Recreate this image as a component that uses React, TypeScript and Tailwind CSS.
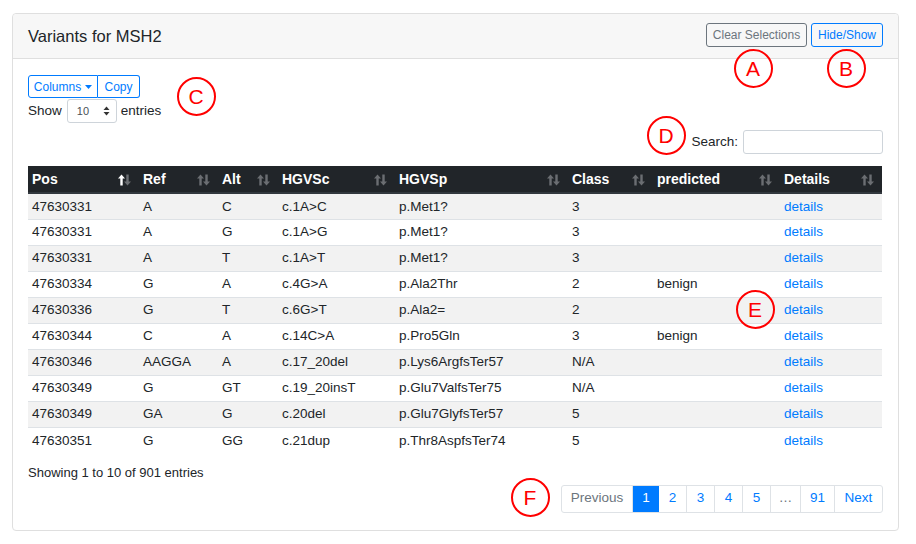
import React from "react";

const rows = [
  ["47630331", "A", "C", "c.1A>C", "p.Met1?", "3", ""],
  ["47630331", "A", "G", "c.1A>G", "p.Met1?", "3", ""],
  ["47630331", "A", "T", "c.1A>T", "p.Met1?", "3", ""],
  ["47630334", "G", "A", "c.4G>A", "p.Ala2Thr", "2", "benign"],
  ["47630336", "G", "T", "c.6G>T", "p.Ala2=", "2", ""],
  ["47630344", "C", "A", "c.14C>A", "p.Pro5Gln", "3", "benign"],
  ["47630346", "AAGGA", "A", "c.17_20del", "p.Lys6ArgfsTer57", "N/A", ""],
  ["47630349", "G", "GT", "c.19_20insT", "p.Glu7ValfsTer75", "N/A", ""],
  ["47630349", "GA", "G", "c.20del", "p.Glu7GlyfsTer57", "5", ""],
  ["47630351", "G", "GG", "c.21dup", "p.Thr8AspfsTer74", "5", ""],
];

const cols: { name: string; w: number; active?: boolean }[] = [
  { name: "Pos", w: 111, active: true },
  { name: "Ref", w: 79 },
  { name: "Alt", w: 60 },
  { name: "HGVSc", w: 117 },
  { name: "HGVSp", w: 173 },
  { name: "Class", w: 85 },
  { name: "predicted", w: 127 },
  { name: "Details", w: 102 },
];

function Mark({ letter, x, y }: { letter: string; x: number; y: number }) {
  return (
    <div
      className="absolute w-[39px] h-[39px] rounded-full border-2 border-[#ff0000] flex items-center justify-center text-[#ff0000] text-[21px] leading-none"
      style={{ left: x - 19.5, top: y - 19.5 }}
    >
      {letter}
    </div>
  );
}

function SortIcon({ active }: { active?: boolean }) {
  return (
    <svg width="14" height="12" viewBox="0 0 14 12" className="mr-[7px] shrink-0">
      <g fill={active ? "#ffffff" : "#6b6e72"} stroke="none">
        <path d="M3.5 0.5 L7 4.5 L4.7 4.5 L4.7 11.5 L2.3 11.5 L2.3 4.5 L0 4.5 Z" />
      </g>
      <g fill="#6b6e72" stroke="none">
        <path d="M9.5 11.5 L6 7.5 L8.3 7.5 L8.3 0.5 L10.7 0.5 L10.7 7.5 L13 7.5 Z" />
      </g>
    </svg>
  );
}

export default function App() {
  return (
    <div
      className="relative w-[916px] h-[544px] bg-white pt-[13px] pl-[12px] text-[#212529]"
      style={{ fontFamily: '"Liberation Sans", Arial, sans-serif' }}
    >
      <div className="w-[887px] h-[518px] border border-[#dfdfdf] rounded-[4px] flex flex-col">
        {/* header */}
        <div className="h-[45px] bg-[#f7f7f7] border-b border-[#dfdfdf] flex items-center justify-between pl-[15px] pr-[15px] rounded-t-[4px]">
          <div className="text-[16.5px] text-[#212529] pt-[1px]">Variants for MSH2</div>
          <div className="flex gap-[4px] -mt-[2px]">
            <button className="h-[24px] px-0 border border-[#6c757d] rounded-[3px] text-[12px] text-[#6c757d] w-[101px] whitespace-nowrap">
              Clear Selections
            </button>
            <button className="h-[24px] px-0 border border-[#007bff] rounded-[3px] text-[12px] text-[#007bff] w-[72px] whitespace-nowrap">
              Hide/Show
            </button>
          </div>
        </div>
        {/* body */}
        <div className="flex flex-col px-[15px] pt-[16px]">
          <div className="flex">
            <button className="h-[23px] w-[70px] border border-[#007bff] rounded-l-[3px] text-[12px] text-[#007bff] flex items-center justify-center gap-[4px]">
              Columns
              <svg width="7" height="4" viewBox="0 0 7 4">
                <path d="M0 0 L7 0 L3.5 4 Z" fill="#007bff" />
              </svg>
            </button>
            <button className="h-[23px] w-[42px] border border-l-0 border-[#007bff] rounded-r-[3px] text-[12px] text-[#007bff]">
              Copy
            </button>
          </div>
          <div className="flex items-center mt-[1px] text-[13.5px]">
            <span>Show</span>
            <div className="ml-[5px] h-[24px] w-[50px] border border-[#ced4da] rounded-[3px] flex items-center justify-between pl-[9px] pr-[6px]">
              <span className="text-[11px] text-[#495057]">10</span>
              <svg width="7" height="10" viewBox="0 0 7 10">
                <path d="M0.5 4 L3.5 0.5 L6.5 4 Z" fill="#333" />
                <path d="M0.5 6 L3.5 9.5 L6.5 6 Z" fill="#333" />
              </svg>
            </div>
            <span className="ml-[4px]">entries</span>
          </div>
          <div className="flex items-center justify-end mt-[7px] text-[13.5px]">
            <span className="mr-[5px]">Search:</span>
            <div className="h-[24px] w-[140px] border border-[#ced4da] rounded-[3px]" />
          </div>
          {/* table */}
          <table className="mt-[12px] table-fixed border-collapse w-[854px] text-[13.5px]">
            <colgroup>
              {cols.map((c) => (
                <col key={c.name} style={{ width: c.w }} />
              ))}
            </colgroup>
            <thead>
              <tr className="bg-[#212529] h-[27px] border-b-2 border-[#32383e]">
                {cols.map((c) => (
                  <th key={c.name} className="p-0 text-left font-bold text-white text-[14px]">
                    <div className="flex items-center justify-between pl-[4px] pt-[1px]">
                      <span>{c.name}</span>
                      <SortIcon active={c.active} />
                    </div>
                  </th>
                ))}
              </tr>
            </thead>
            <tbody>
              {rows.map((r, i) => (
                <tr
                  key={i}
                  className={`h-[26px] border-t border-[#dee2e6] ${i % 2 === 0 ? "bg-[#f2f2f2]" : "bg-white"}`}
                >
                  {r.map((v, j) => (
                    <td key={j} className="p-0 pl-[4px] pt-[1px] whitespace-nowrap">
                      {v}
                    </td>
                  ))}
                  <td className="p-0 pl-[4px] pt-[1px] text-[#007bff]">details</td>
                </tr>
              ))}
            </tbody>
          </table>
          <div className="mt-[10px] text-[13px]">Showing 1 to 10 of 901 entries</div>
          <div className="flex justify-end mt-[2px]">
            <div className="flex h-[28px] border border-[#dee2e6] rounded-[3px] text-[13.5px]">
              <div className="w-[71px] flex items-center justify-center text-[#6c757d] border-r border-[#dee2e6]">Previous</div>
              <div className="w-[26px] flex items-center justify-center bg-[#007bff] text-white">1</div>
              <div className="w-[28px] flex items-center justify-center text-[#007bff] border-r border-[#dee2e6]">2</div>
              <div className="w-[28px] flex items-center justify-center text-[#007bff] border-r border-[#dee2e6]">3</div>
              <div className="w-[28px] flex items-center justify-center text-[#007bff] border-r border-[#dee2e6]">4</div>
              <div className="w-[28px] flex items-center justify-center text-[#007bff] border-r border-[#dee2e6]">5</div>
              <div className="w-[30px] flex items-center justify-center text-[#6c757d] border-r border-[#dee2e6]">…</div>
              <div className="w-[34px] flex items-center justify-center text-[#007bff] border-r border-[#dee2e6]">91</div>
              <div className="w-[47px] flex items-center justify-center text-[#007bff]">Next</div>
            </div>
          </div>
        </div>
      </div>
      <Mark letter="A" x={753} y={68} />
      <Mark letter="B" x={846} y={68} />
      <Mark letter="C" x={196} y={96} />
      <Mark letter="D" x={666} y={135} />
      <Mark letter="E" x={755} y={309} />
      <Mark letter="F" x={530} y={497} />
    </div>
  );
}
